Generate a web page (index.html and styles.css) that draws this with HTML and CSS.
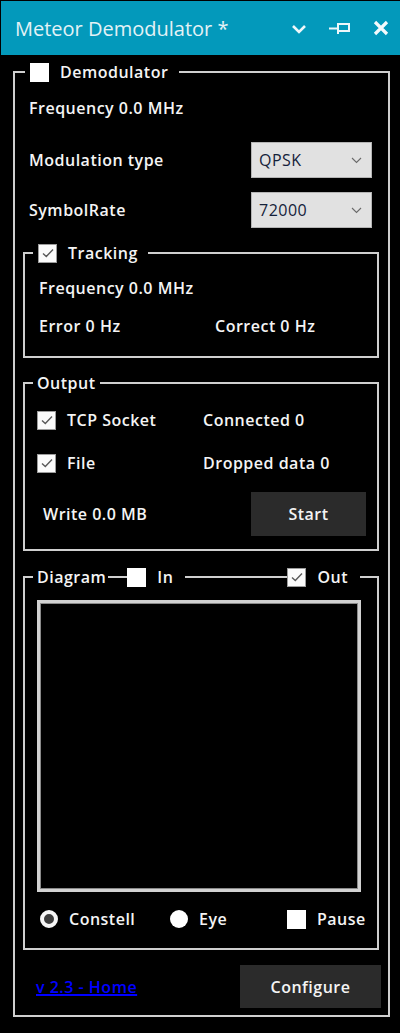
FILE: index.html
```html
<!DOCTYPE html>
<html lang="en">
<head>
<meta charset="utf-8">
<title>Meteor Demodulator</title>
<link rel="stylesheet" href="styles.css">
</head>
<body>
<div class="window">
  <header class="titlebar">
    <span class="title">Meteor Demodulator *</span>
    <div class="title-icons">
      <svg class="ic-chev" width="16" height="10" viewBox="0 0 16 10"><path d="M2 2 L8 8 L14 2" fill="none" stroke="#eef7fa" stroke-width="2.6"/></svg>
      <svg class="ic-pin" width="22" height="12" viewBox="0 0 22 12"><path d="M0 5.5 H9 M9 0 V11 M9 1 H20 V8 H9" fill="none" stroke="#eef7fa" stroke-width="2"/></svg>
      <svg class="ic-close" width="16" height="16" viewBox="0 0 16 16"><path d="M2 2 L14 14 M14 2 L2 14" fill="none" stroke="#f4fafc" stroke-width="3.2"/></svg>
    </div>
  </header>

  <main class="content">
    <section class="group outer">
      <div class="group-title outer-title">
        <div class="gt-item outer-item"><span class="cb"></span><span>Demodulator</span></div>
      </div>
      <div class="row o-freq">Frequency 0.0 MHz</div>
      <div class="row combo-row o-mod">
        <span>Modulation type</span>
        <div class="combo"><span>QPSK</span><svg width="11" height="7" viewBox="0 0 11 7"><path d="M1 1 L5.5 5.5 L10 1" fill="none" stroke="#6a6a6a" stroke-width="1.1"/></svg></div>
      </div>
      <div class="row combo-row o-sym">
        <span>SymbolRate</span>
        <div class="combo"><span>72000</span><svg width="11" height="7" viewBox="0 0 11 7"><path d="M1 1 L5.5 5.5 L10 1" fill="none" stroke="#6a6a6a" stroke-width="1.1"/></svg></div>
      </div>

      <section class="group inner tracking">
        <div class="group-title inner-title">
          <div class="gt-item tr-item"><span class="cb checked"><svg width="16" height="16" viewBox="0 0 16 16"><path d="M3 8.5 L6.3 11.5 L13 4.5" fill="none" stroke="#5a5a5a" stroke-width="1.4"/></svg></span><span>Tracking</span></div>
        </div>
        <div class="row t-freq">Frequency 0.0 MHz</div>
        <div class="row t-err"><span>Error 0 Hz</span><span>Correct 0 Hz</span></div>
      </section>

      <section class="group inner output">
        <div class="group-title inner-title">
          <div class="gt-item out-item"><span>Output</span></div>
        </div>
        <div class="row opt-row tcp">
          <div class="chk"><span class="cb checked"><svg width="16" height="16" viewBox="0 0 16 16"><path d="M3 8.5 L6.3 11.5 L13 4.5" fill="none" stroke="#5a5a5a" stroke-width="1.4"/></svg></span><span>TCP Socket</span></div>
          <span>Connected 0</span>
        </div>
        <div class="row opt-row file">
          <div class="chk"><span class="cb checked"><svg width="16" height="16" viewBox="0 0 16 16"><path d="M3 8.5 L6.3 11.5 L13 4.5" fill="none" stroke="#5a5a5a" stroke-width="1.4"/></svg></span><span>File</span></div>
          <span>Dropped data 0</span>
        </div>
        <div class="row write-row">
          <span>Write 0.0 MB</span>
          <button class="btn start">Start</button>
        </div>
      </section>

      <section class="group inner diagram">
        <div class="group-title inner-title diag-title">
          <div class="gt-item diag-item"><span>Diagram</span></div>
          <div class="gt-item in-item"><span class="cb"></span><span>In</span></div>
          <div class="gt-spacer"></div>
          <div class="gt-item in-item"><span class="cb checked"><svg width="16" height="16" viewBox="0 0 16 16"><path d="M3 8.5 L6.3 11.5 L13 4.5" fill="none" stroke="#5a5a5a" stroke-width="1.4"/></svg></span><span>Out</span></div>
        </div>
        <div class="plot"></div>
        <div class="row radio-row">
          <div class="chk"><span class="radio on"></span><span>Constell</span></div>
          <div class="chk"><span class="radio"></span><span>Eye</span></div>
          <div class="chk"><span class="cb"></span><span>Pause</span></div>
        </div>
      </section>

      <div class="row footer">
        <a class="home" href="#">v 2.3 - Home</a>
        <button class="btn configure">Configure</button>
      </div>
    </section>
  </main>
</div>
</body>
</html>
```

FILE: styles.css
```css
* { box-sizing: border-box; }

html, body {
  margin: 0;
  padding: 0;
  background: #000;
}

body {
  font-family: "Open Sans", "Noto Sans", "DejaVu Sans", sans-serif;
  font-size: 16px;
  font-weight: 600;
  letter-spacing: 0.5px;
  color: #f4f4f4;
}

.window {
  width: 400px;
  height: 1033px;
  overflow: hidden;
  background: #000;
}

/* ---------- title bar ---------- */
.titlebar {
  height: 54px;
  margin: 1px 0 0 1px;
  background: #0399bb;
  display: flex;
  align-items: center;
  padding: 0 11px 0 14px;
}

.title {
  flex: 1;
  font-size: 20px;
  font-weight: 400;
  letter-spacing: 0;
  color: #e4f2f6;
  white-space: nowrap;
}

.title-icons {
  display: flex;
  align-items: center;
  gap: 22px;
}

.ic-chev { margin-top: 2px; }
.ic-pin { margin-top: 1px; }

/* ---------- layout ---------- */
.content {
  padding: 16px 10px 0 13px;
}

.group {
  border: 2px solid #cfcfcf;
}

.group-title {
  display: flex;
  align-items: center;
  height: 20px;
  margin-top: -11px;
}

.gt-item {
  display: flex;
  align-items: center;
  gap: 11px;
  height: 20px;
  background: #000;
}

.outer-title { padding-left: 10px; }
.outer-item { padding: 0 11px 0 5px; }

.inner {
  margin-left: 8px;
  margin-right: 9px;
}

.inner-title { padding-left: 8px; }
.tr-item { padding: 0 10px 0 5px; }
.out-item { padding: 0 4px; }

.row {
  display: flex;
  align-items: center;
  height: 24px;
  white-space: nowrap;
}

/* ---------- demodulator ---------- */
.o-freq { margin-top: 14px; padding-left: 14px; }

.combo-row {
  height: 36px;
  justify-content: space-between;
  padding: 0 16px 0 14px;
}
.o-mod { margin-top: 22px; }
.o-sym { margin-top: 14px; }

.combo {
  width: 121px;
  height: 36px;
  background: #e1e1e1;
  border: 1px solid #b4b4b4;
  display: flex;
  align-items: center;
  justify-content: space-between;
  padding: 0 9px 0 7px;
  color: #14213a;
  font-weight: 400;
  font-size: 16px;
}

/* ---------- tracking ---------- */
.tracking { margin-top: 24px; padding-bottom: 18px; }
.t-freq { margin-top: 13px; padding-left: 14px; }
.t-err {
  margin-top: 14px;
  padding-left: 14px;
  display: grid;
  grid-template-columns: 176px auto;
  align-items: center;
}

/* ---------- output ---------- */
.output { margin-top: 24px; padding-bottom: 13px; }

.opt-row {
  padding-left: 12px;
  display: grid;
  grid-template-columns: 166px auto;
  align-items: center;
}
.tcp { margin-top: 15px; }
.file { margin-top: 19px; }

.chk {
  display: flex;
  align-items: center;
  gap: 11px;
}

.write-row {
  margin-top: 17px;
  height: 44px;
  padding: 0 11px 0 18px;
  justify-content: space-between;
}

.btn {
  font-family: inherit;
  font-size: 16px;
  font-weight: 600;
  letter-spacing: 0.5px;
  color: #f4f4f4;
  background: #2b2b2b;
  border: none;
  padding: 0;
}

.start { width: 115px; height: 44px; }

/* ---------- checkbox / radio ---------- */
.cb {
  width: 19px;
  height: 19px;
  background: #fff;
  flex: none;
  display: flex;
  align-items: center;
  justify-content: center;
}
.cb.checked {
  border: 1px solid #9c9c9c;
  background: #fbfbfb;
}

.radio {
  width: 18px;
  height: 18px;
  border-radius: 50%;
  background: #fff;
  flex: none;
}
.radio.on {
  background: #3e3e3e;
  border: 4px solid #f6f6f6;
}

/* ---------- diagram ---------- */
.diagram { margin-top: 25px; padding-bottom: 20px; }

.diag-title { padding-right: 17px; }
.diag-item { padding: 0 2px 0 4px; }
.in-item { margin-left: 19px; padding-right: 12px; }
.gt-spacer { flex: 1; }

.plot {
  margin: 13px 16px 0 12px;
  height: 292px;
  border: 3px solid #d2d2d2;
  box-shadow: inset 0 0 0 1px #8a8a8a;
  background: #000;
}

.radio-row {
  margin-top: 16px;
  height: 20px;
  padding-left: 15px;
  display: grid;
  grid-template-columns: 130px 117px auto;
  align-items: center;
}

/* ---------- footer ---------- */
.footer {
  margin-top: 15px;
  height: 43px;
  padding: 0 7px 0 21px;
  margin-bottom: 7px;
  justify-content: space-between;
}

.home {
  color: #0000ff;
  text-decoration: underline;
  text-decoration-thickness: 2px;
}

.configure { width: 141px; height: 43px; }
```
